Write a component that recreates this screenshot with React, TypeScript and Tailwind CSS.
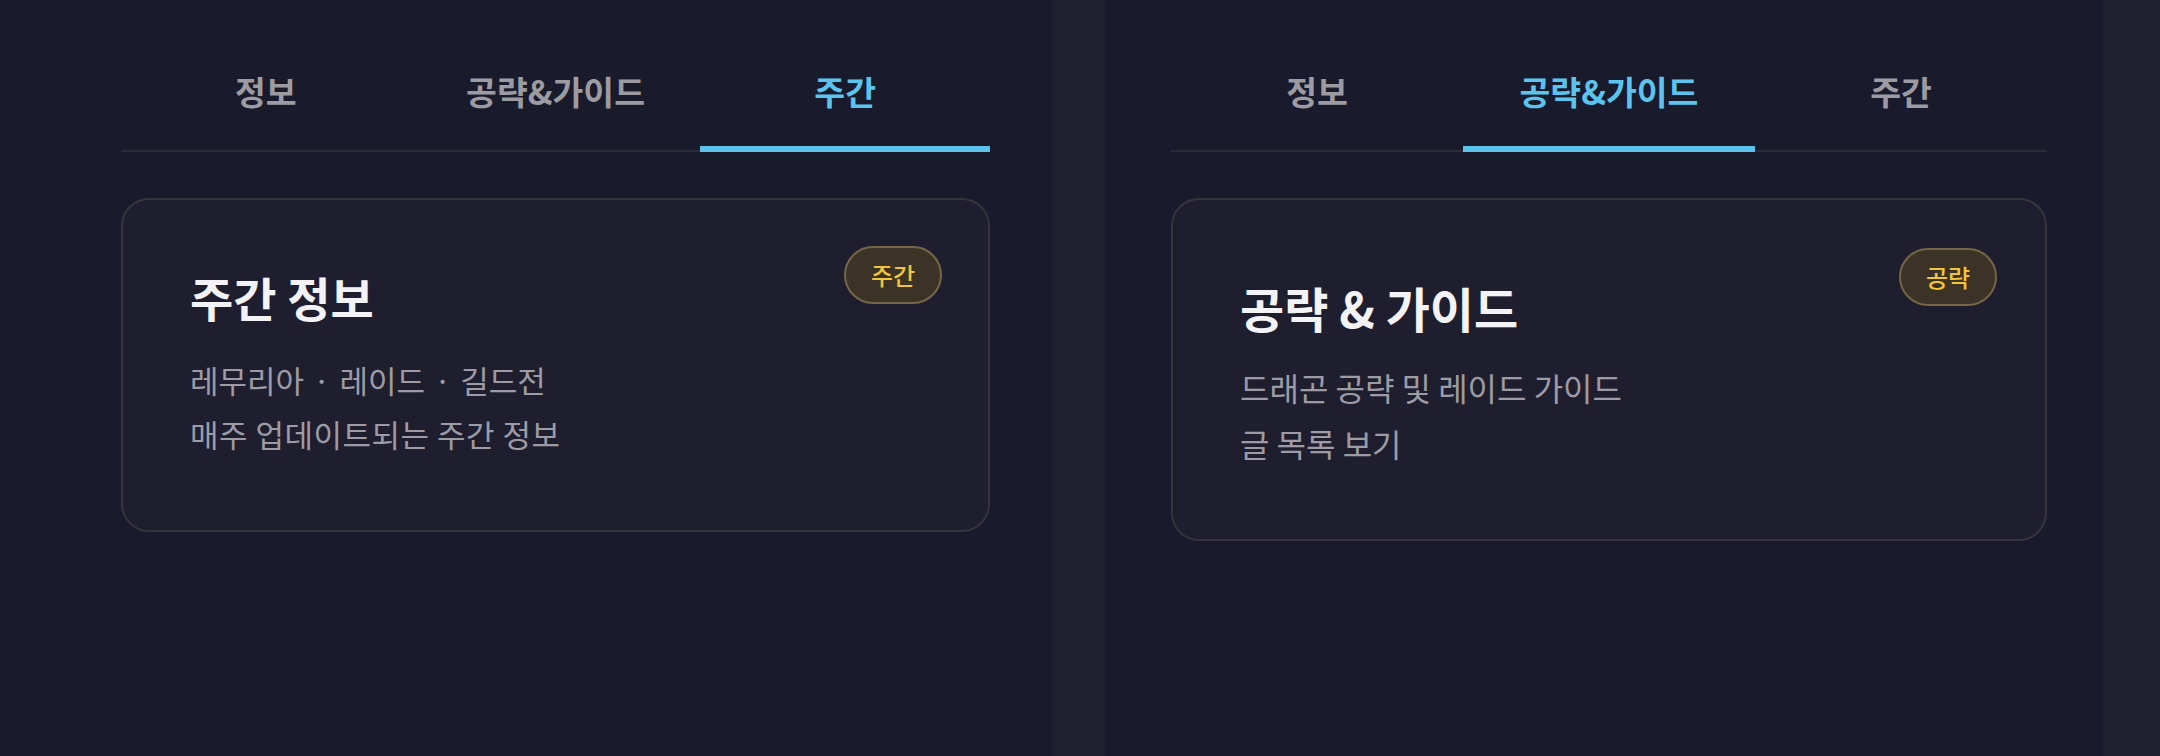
import React from "react";

type TabProps = { labels: string[]; active: number };

function Tabs({ labels, active }: TabProps) {
  return (
    <div className="flex border-b-2 border-[#2c2b37]">
      {labels.map((l, i) => (
        <div key={l} className="relative flex-1 flex justify-center pt-[71px] pb-[39px]">
          <span
            className={
              i === active
                ? "text-[33.5px] leading-[40px] font-bold text-[#5bc3ec]"
                : "text-[33.5px] leading-[40px] font-bold text-[#9b9ba1]"
            }
          >
            {l}
          </span>
          {i === active && (
            <div className="absolute left-0 right-0 bottom-[-2px] h-[6px] bg-[#5bc3ec]" />
          )}
        </div>
      ))}
    </div>
  );
}

export default function App() {
  return (
    <div className="w-[2160px] h-[756px] flex overflow-hidden bg-[#1a1a2d] font-['Noto_Sans_CJK_KR',sans-serif]">
      <div className="w-[50px] shrink-0 bg-[#1a1a2c]" />
      <div className="w-[1002px] shrink-0 pl-[71px] pr-[62px] bg-[#1a1a2d]">
        <Tabs labels={["정보", "공략&가이드", "주간"]} active={2} />
        <div className="relative mt-[46px] h-[334px] rounded-[28px] border-2 border-[#37353c] bg-[#1f1e2f] pl-[67px] pt-[71px]">
          <div className="absolute top-[46px] right-[46px] w-[98px] h-[58px] rounded-full border-2 border-[#756647] bg-[#3a3326] flex items-center justify-center">
            <span className="text-[24px] leading-none font-medium text-[#f2c53d]">주간</span>
          </div>
          <div className="text-[47px] leading-[52px] font-bold text-[#f3f3f6]">주간 정보</div>
          <div className="mt-[30px] text-[31px] leading-[54px] text-[#9d9ca5]">
            레무리아 <span className="mx-[2px]">·</span> 레이드 <span className="mx-[2px]">·</span> 길드전
          </div>
          <div className="text-[31px] leading-[54px] text-[#9d9ca5] tracking-[0.5px]">매주 업데이트되는 주간 정보</div>
        </div>
      </div>
      <div className="w-[54px] shrink-0 bg-[#1f1f30]" />
      <div className="w-[996px] shrink-0 pl-[65px] pr-[55px] bg-[#1a1a2d]">
        <Tabs labels={["정보", "공략&가이드", "주간"]} active={1} />
        <div className="relative mt-[46px] h-[343px] rounded-[28px] border-2 border-[#37353c] bg-[#1f1e2f] pl-[67px] pt-[80px]">
          <div className="absolute top-[48px] right-[48px] w-[98px] h-[58px] rounded-full border-2 border-[#756647] bg-[#3a3326] flex items-center justify-center">
            <span className="text-[24px] leading-none font-medium text-[#f2c53d]">공략</span>
          </div>
          <div className="text-[48px] leading-[54px] font-bold text-[#f3f3f6]">공략 &amp; 가이드</div>
          <div className="mt-[25px] text-[32px] leading-[56px] text-[#9d9ca5]">드래곤 공략 및 레이드 가이드</div>
          <div className="text-[32px] leading-[56px] text-[#9d9ca5]">글 목록 보기</div>
        </div>
      </div>
      <div className="flex-1 bg-[#1f1f30]" />
    </div>
  );
}
